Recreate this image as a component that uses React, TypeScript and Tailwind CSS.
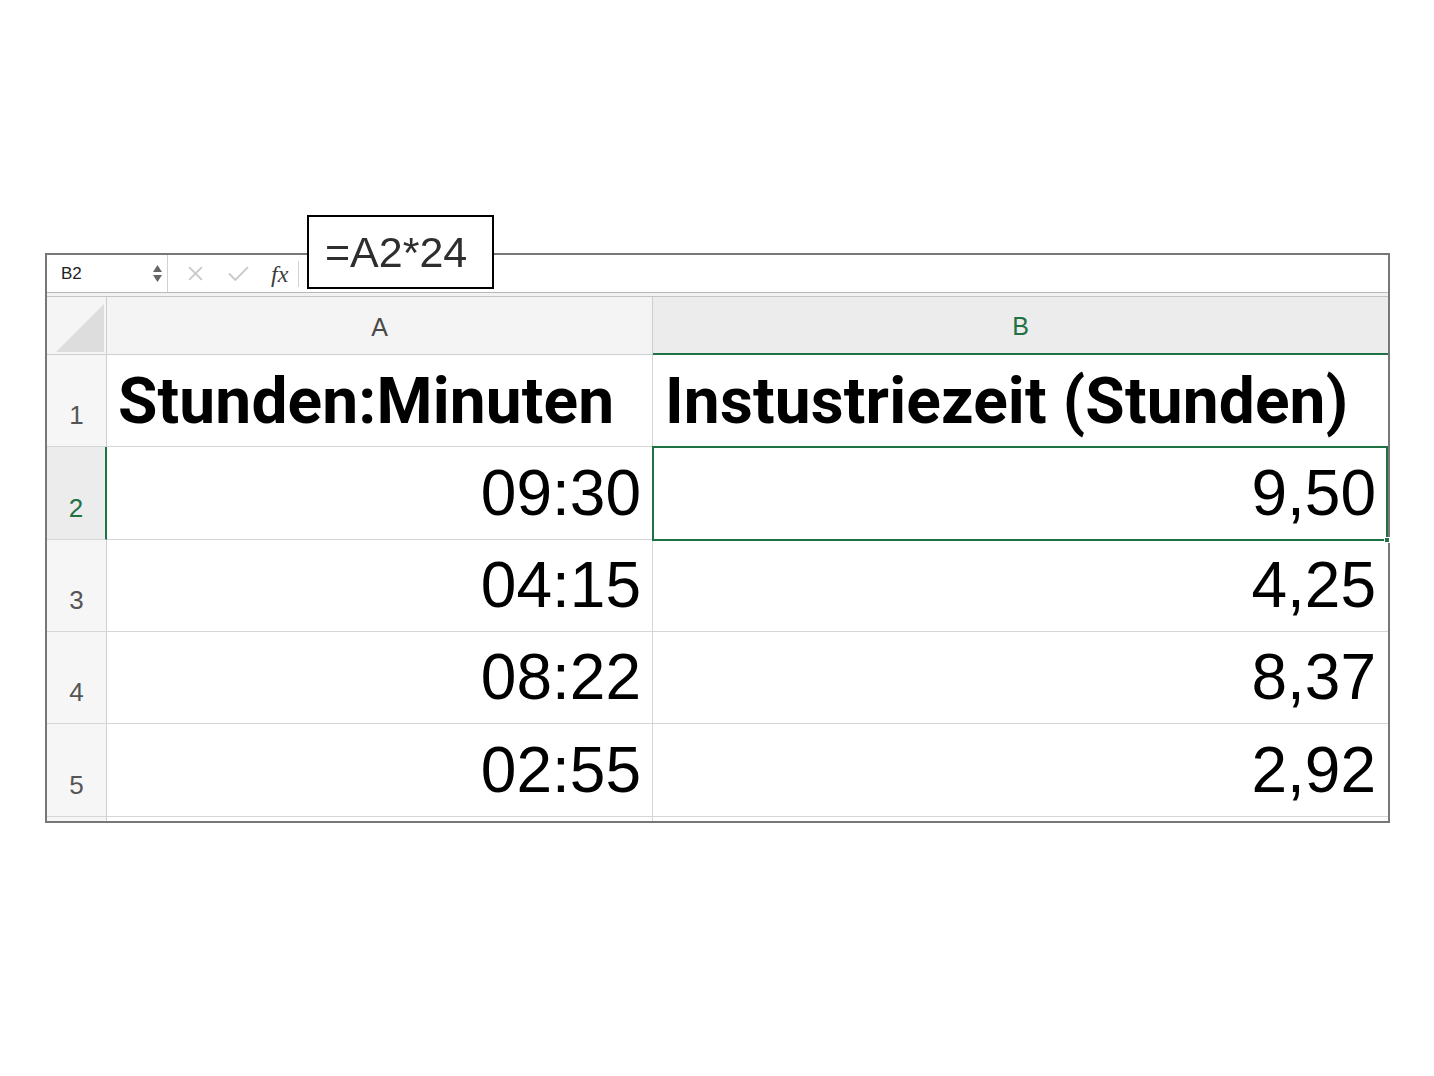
import { ReactNode } from "react";

const rows = [
  { n: 1, a: "Stunden:Minuten", b: "Instustriezeit (Stunden)", head: true, h: "h-[92px]" },
  { n: 2, a: "09:30", b: "9,50", h: "h-[93px]" },
  { n: 3, a: "04:15", b: "4,25", h: "h-[92px]" },
  { n: 4, a: "08:22", b: "8,37", h: "h-[92px]" },
  { n: 5, a: "02:55", b: "2,92", h: "h-[93px]" },
];

const selectedRow = 2;

function Cell({ children, className }: { children?: ReactNode; className?: string }) {
  return <div className={`flex h-full items-end ${className ?? ""}`}>{children}</div>;
}

function FormulaBar() {
  return (
    <div className="flex h-[38px] items-center border-b border-[#b9b9b9] bg-white font-['Liberation_Sans',sans-serif]">
      <div className="flex h-full w-[121px] items-center justify-between border-r border-[#d2d2d2] pl-[14px] pr-[5px]">
        <span className="text-[17px] text-[#222]">B2</span>
        <span className="flex flex-col items-center gap-[3px] leading-none">
          <svg width="9" height="7" viewBox="0 0 9 7"><path d="M4.5 0 L9 7 H0 Z" fill="#666" /></svg>
          <svg width="9" height="7" viewBox="0 0 9 7"><path d="M0 0 H9 L4.5 7 Z" fill="#666" /></svg>
        </span>
      </div>
      <div className="flex h-full items-center">
        <svg className="ml-[19px]" width="17" height="17" viewBox="0 0 16 16">
          <path d="M2 2 L14 14 M14 2 L2 14" stroke="#c9c9c9" strokeWidth="1.8" />
        </svg>
        <svg className="ml-[24px]" width="21" height="17" viewBox="0 0 20 16">
          <path d="M1 8 L7 14 L19 2" stroke="#c9c9c9" strokeWidth="1.8" fill="none" />
        </svg>
        <span className="ml-[22px] font-['Liberation_Serif',serif] text-[24px] italic text-[#3c3c3c]">fx</span>
        <div className="ml-[10px] h-[26px] w-px bg-[#d2d2d2]" />
      </div>
    </div>
  );
}

export default function App() {
  return (
    <div className="relative h-[1076px] w-full bg-white pl-[45px] pt-[253px]">
      {/* formula popout over the bar */}
      <div className="absolute left-[307px] top-[215px] z-10 flex h-[74px] w-[187px] items-center border-2 border-black bg-white pl-[16px]">
        <span className="font-['Liberation_Sans',sans-serif] text-[43px] leading-none text-[#2e2e2e] blur-[0.6px]">=A2*24</span>
      </div>

      <div className="w-[1345px] border-2 border-[#777]">
        <FormulaBar />
        <div className="h-[4px] border-b border-[#c4c4c4] bg-[#f2f2f2]" />

        {/* column headers */}
        <div className="flex h-[58px] font-['Liberation_Sans',sans-serif] text-[25px]">
          <div className="flex w-[60px] items-end justify-end border-b border-r border-[#cfcfcf] bg-[#f5f5f5] pb-[2px] pr-[2px]">
            <svg width="48" height="48" viewBox="0 0 48 48"><path d="M48 0 V48 H0 Z" fill="#dddddd" /></svg>
          </div>
          <div className="flex w-[546px] items-center justify-center border-b border-r border-[#cfcfcf] bg-[#f4f4f4] pt-[4px] text-[#4a4a4a]">
            A
          </div>
          <div className="flex w-[735px] items-center justify-center border-b-2 border-[#1f7244] bg-[#ececec] pt-[4px] text-[#1f7244]">
            B
          </div>
        </div>

        {rows.map((r) => {
          const sel = r.n === selectedRow;
          return (
            <div key={r.n} className={`flex ${r.h}`}>
              <div
                className={`flex w-[60px] items-end justify-center border-b border-[#d6d6d6] pb-[18px] font-['Liberation_Sans',sans-serif] text-[26px] leading-none ${
                  sel ? "border-r-2 border-r-[#1f7244] bg-[#ececec] text-[#1f7244]" : "border-r border-r-[#d0d0d0] bg-[#f6f6f6] text-[#555]"
                }`}
              >
                {r.n}
              </div>
              <Cell
                className={`w-[546px] border-b border-r border-[#d6d6d6] ${
                  r.head
                    ? "justify-start pb-[12px] pl-[11px] font-['Roboto',sans-serif] text-[64px] font-bold tracking-[0.15px]"
                    : "justify-end pb-[14px] pr-[11px] font-['Liberation_Sans',sans-serif] text-[64px]"
                } leading-none text-black`}
              >
                {r.a}
              </Cell>
              <div className="relative w-[735px]">
                <Cell
                  className={`border-b border-[#d6d6d6] ${
                    r.head
                      ? "justify-start pb-[12px] pl-[12px] font-['Roboto',sans-serif] text-[64px] font-bold tracking-[0.15px]"
                      : "justify-end pb-[14px] pr-[12px] font-['Liberation_Sans',sans-serif] text-[64px]"
                  } leading-none text-black`}
                >
                  {r.b}
                </Cell>
                {sel && (
                  <div className="absolute -bottom-px -left-px -top-px right-0 border-2 border-[#1f7244]">
                    <div className="absolute -bottom-[4px] -right-[4px] h-[6px] w-[6px] border border-white bg-[#1f7244]" />
                  </div>
                )}
              </div>
            </div>
          );
        })}
        <div className="flex h-[4px]">
          <div className="w-[60px] border-r border-[#d0d0d0] bg-[#f6f6f6]" />
          <div className="w-[546px] border-r border-[#d6d6d6]" />
          <div className="w-[735px]" />
        </div>
      </div>
    </div>
  );
}
